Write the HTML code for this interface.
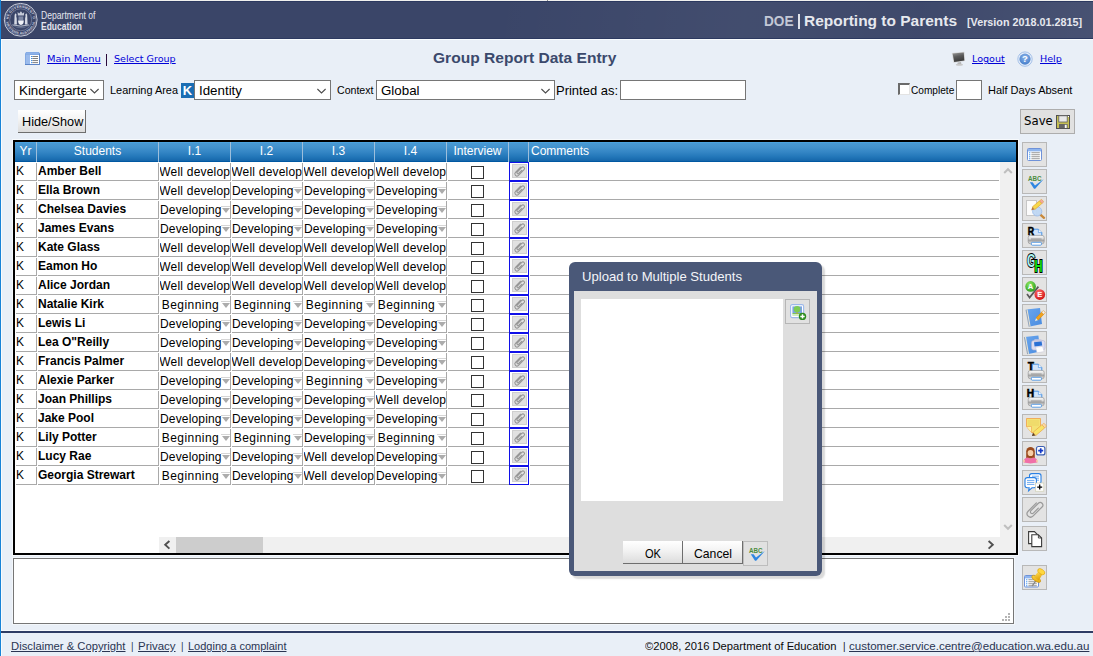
<!DOCTYPE html>
<html><head><meta charset="utf-8"><title>Group Report Data Entry</title>
<style>
*{box-sizing:border-box;margin:0;padding:0}
html,body{width:1093px;height:656px;overflow:hidden}
body{background:#e9eff7;font-family:"Liberation Sans",Arial,sans-serif;font-size:12px;color:#000;position:relative}
.abs{position:absolute}
.v{font-family:"DejaVu Sans","Liberation Sans",sans-serif}
a{color:#0000ee;text-decoration:underline}
#leftline{left:0;top:0;width:1px;height:656px;background:#1883d7}
#topline{left:1px;top:0;width:1092px;height:1px;background:#f0f0ee}
#hdr{left:1px;top:1px;width:1092px;height:39px;background:linear-gradient(97deg,rgba(255,255,255,0) 45%,rgba(255,255,255,.045) 68%,rgba(255,255,255,.025) 84%,rgba(255,255,255,.07) 100%),#3a4568;border-top:1px solid #2c3960;border-bottom:1px solid #f8fbfd;box-shadow:inset 0 -1px 0 #2c3960}
#leftwhite{left:1px;top:40px;width:1px;height:616px;background:#f8fbfd}
.t{white-space:nowrap;transform-origin:0 0;display:block}
.btn3{background:linear-gradient(#ffffff,#f4f4f4 40%,#dcdcdc);border-right:1px solid #6e6e6e;border-bottom:1px solid #6e6e6e}
.sel{border:1px solid #767676;background:#fff;height:20px;font-size:13.33px;line-height:18px;padding-left:4px;padding-top:1px;white-space:nowrap;overflow:hidden}
.sel svg{position:absolute;right:3px;top:7px}
.lbl{font-size:11px;line-height:14px;white-space:nowrap}
.btn{border:1px solid #adadad;background:#e1e1e1;font-size:13.33px;text-align:center;white-space:nowrap}
/* table */
#grid{left:13px;top:140px;width:1005px;height:415px;border:2px solid #000;background:#fff;box-shadow:0 0 0 1px #f6f9fc}
#ghead{left:15px;top:142px;width:1001px;height:20px;background:linear-gradient(#4ba3e0 0,#4ba3e0 5%,#4899d3 6%,#4493ce 25%,#3486c5 50%,#2276b8 75%,#1566aa 94.9%,#0058a2 95%,#0058a2 100%)}
.th{top:142px;height:20px;color:#fff;font-size:12px;line-height:19px;text-align:center;border-right:1px solid #9dbfdc;white-space:nowrap}
.row{left:15px;width:985px;height:18px}
.c{position:absolute;top:0;height:18px;font-size:12px;line-height:17px;white-space:nowrap;overflow:hidden;border-right:1px solid #a9a9a9;border-bottom:1px solid #a9a9a9}
.yr{left:1px;width:21px;padding-left:0}
.nm{left:23px;width:121px;font-weight:bold;padding-left:0}
.sl{width:71px;text-align:center;padding-right:9px;letter-spacing:0.2px}
.sl.w{text-align:left;padding:0;letter-spacing:0.2px;text-indent:-0.7px}
.sl s{position:absolute;right:0;top:5px;width:9px;height:1px;background:#d6d6d6}
.sl i{position:absolute;right:0;top:7px;width:0;height:0;border-left:4.5px solid transparent;border-right:4.5px solid transparent;border-top:5px solid #acacac}
.iv{left:433px;width:61px;border-right:0}
.iv b{position:absolute;left:23px;top:3px;width:13px;height:13px;border:1px solid #333;background:#fff}
.at{position:absolute;left:494px;top:-1px;width:20px;height:19px;border:1px solid #1010e8;background:#fff}
.at u{position:absolute;left:2px;top:1px;width:15px;height:14px;background:#e1e1e1;border:1px solid #cfcfcf}
.at svg{position:absolute;left:0;top:0}
.cm{left:515px;width:469px;border-right:0}
/* toolbar */
.tb{left:1022px;width:25px;height:25px;border:1px solid #b8b8b8;background:#e3e3e3}
.tb svg{position:absolute;left:-1px;top:-1px}
.sel em{position:absolute;right:0;top:0;width:17px;height:18px;background:#fff}
#dlg{left:569px;top:262px;width:253px;height:314px;background:#4a5878;border-radius:6px;box-shadow:3px 3px 1.5px rgba(0,0,0,0.15)}
.sl{line-height:18px}
.sl.b{letter-spacing:.45px}
.sl.d{letter-spacing:.16px}
</style></head><body>

<div class="abs" id="topline"></div>
<div class="abs" style="left:547px;top:0;width:1px;height:1px;background:#8a8a8a"></div>
<div class="abs" id="hdr"></div>
<div class="abs" id="leftline"></div>
<div class="abs" id="leftwhite"></div>
<svg class="abs" style="left:0;top:0" width="42" height="40" viewBox="0 0 42 40">
<defs><path id="arcT" d="M8.6 19.8 A12.1 12.1 0 0 1 32.8 19.8"/><path id="arcB" d="M6.2 19.8 A14.5 14.5 0 0 0 35.2 19.8"/></defs>
<circle cx="20.7" cy="19.8" r="16.4" fill="none" stroke="#c9cedb" stroke-width="1"/>
<circle cx="20.7" cy="19.8" r="15.3" fill="none" stroke="#8e97b2" stroke-width=".5"/>
<circle cx="20.7" cy="19.8" r="11" fill="none" stroke="#8e97b2" stroke-width=".6"/>
<text font-family="Liberation Sans,Arial,sans-serif" font-weight="bold" font-size="3.3" fill="#d3d7e2" letter-spacing=".25"><textPath href="#arcT" startOffset="50%" text-anchor="middle">THE GOVERNMENT OF</textPath></text>
<text font-family="Liberation Sans,Arial,sans-serif" font-weight="bold" font-size="3.3" fill="#d3d7e2" letter-spacing=".25"><textPath href="#arcB" startOffset="50%" text-anchor="middle">WESTERN AUSTRALIA</textPath></text>
<path d="M12.2 25.4 Q20.8 28.2 29.4 25.4 Q20.8 31.2 12.2 25.4 Z" fill="#5d6989"/>
<path d="M12.4 24.9 Q20.8 27.3 29.2 24.9" fill="none" stroke="#c3c8d6" stroke-width=".9"/>
<path d="M17.9 15.5 L17.6 12.1 L19.2 13.5 L20.9 11.3 L22.6 13.5 L24.2 12.1 L23.9 15.5 Z" fill="#c6cbd9"/>
<path d="M14.2 24.6 L14.5 17.4 Q14.3 14.2 15.5 13.2 L16.5 14.4 Q15.9 16.2 16.7 18.2 L16.9 24.6 Z" fill="#d6dae5"/>
<path d="M27.6 24.6 L27.3 17.4 Q27.5 14.2 26.3 13.2 L25.3 14.4 Q25.9 16.2 25.1 18.2 L24.9 24.6 Z" fill="#d6dae5"/>
<rect x="18.5" y="16.4" width="4.8" height="4.2" fill="#7f89a6"/>
<path d="M18.1 20.6 H23.8 Q23.8 24.7 20.95 25 Q18.1 24.7 18.1 20.6 Z" fill="#f0f2f7"/>
</svg><div class="abs t" style="left:41px;top:10px;font-family:'Liberation Sans',Arial,sans-serif;color:#e4e6ee;font-size:10px;line-height:11px;transform:scaleX(0.8600)">Department of</div>
<div class="abs t" style="left:41px;top:21px;font-family:'Liberation Sans',Arial,sans-serif;color:#e4e6ee;font-size:10px;line-height:11px;font-weight:bold;transform:scaleX(0.8481)">Education</div>
<div class="abs t" style="left:764px;top:12px;font-family:'Liberation Sans',Arial,sans-serif;color:#c3c8d6;font-size:14px;line-height:18px;font-weight:bold;transform:scaleX(0.9722)">DOE</div>
<div class="abs" style="left:798px;top:14px;width:2px;height:15px;background:#e0e3ea"></div>
<div class="abs t" style="left:803.5px;top:12px;font-family:'Liberation Sans',Arial,sans-serif;color:#e6e8ee;font-size:14px;line-height:18px;font-weight:bold;transform:scaleX(1.1049)">Reporting to Parents</div>
<div class="abs t" style="left:967px;top:15px;font-family:'Liberation Sans',Arial,sans-serif;color:#e6e8ee;font-size:11px;line-height:14px;font-weight:bold;transform:scaleX(0.9794)">[Version 2018.01.2815]</div>
<a class="abs t" style="left:47px;top:52px;font-family:'DejaVu Sans','Liberation Sans',sans-serif;font-size:9.5px;line-height:13px;color:#0000d8;text-decoration:underline;transform:scaleX(1.0367)">Main Menu</a>
<div class="abs" style="left:106px;top:54px;width:1px;height:12px;background:#2a0a3a"></div>
<a class="abs t" style="left:114px;top:52px;font-family:'DejaVu Sans','Liberation Sans',sans-serif;font-size:9.5px;line-height:13px;color:#0000d8;text-decoration:underline;transform:scaleX(1.0073)">Select Group</a>
<div class="abs t" style="left:433px;top:48px;font-family:'Liberation Sans',Arial,sans-serif;font-size:15px;line-height:19px;font-weight:bold;color:#3b496c;transform:scaleX(1.0374)">Group Report Data Entry</div>
<a class="abs t" style="left:972px;top:52px;font-family:'DejaVu Sans','Liberation Sans',sans-serif;font-size:9.5px;line-height:13px;color:#0000d8;text-decoration:underline;transform:scaleX(1.0083)">Logout</a>
<a class="abs t" style="left:1039.5px;top:52px;font-family:'DejaVu Sans','Liberation Sans',sans-serif;font-size:9.5px;line-height:13px;color:#0000d8;text-decoration:underline;transform:scaleX(1.0059)">Help</a>
<div class="abs sel" style="left:14px;top:80px;width:90px"><span class="st">Kindergarten</span><em></em><svg width="11" height="7" viewBox="0 0 11 7"><path d="M1.4 1 L5.5 5 L9.6 1" fill="none" stroke="#4a4a4a" stroke-width="1.05"/></svg></div>
<div class="abs t" style="left:109.5px;top:83px;font-family:'Liberation Sans',Arial,sans-serif;font-size:11px;line-height:14px;transform:scaleX(0.9927)">Learning Area</div>
<div class="abs" style="left:181px;top:83px;width:13px;height:15px;background:#1b6db3;color:#fff;font-size:13px;line-height:15px;font-weight:bold;text-align:center">K</div>
<div class="abs sel" style="left:194px;top:80px;width:137px"><span class="st">Identity</span><svg width="11" height="7" viewBox="0 0 11 7"><path d="M1.4 1 L5.5 5 L9.6 1" fill="none" stroke="#4a4a4a" stroke-width="1.05"/></svg></div>
<div class="abs t" style="left:336.5px;top:83px;font-family:'Liberation Sans',Arial,sans-serif;font-size:11px;line-height:14px;transform:scaleX(0.9625)">Context</div>
<div class="abs sel" style="left:376px;top:80px;width:179px"><span class="st">Global</span><svg width="11" height="7" viewBox="0 0 11 7"><path d="M1.4 1 L5.5 5 L9.6 1" fill="none" stroke="#4a4a4a" stroke-width="1.05"/></svg></div>
<div class="abs t" style="left:555.6px;top:83px;font-family:'Liberation Sans',Arial,sans-serif;font-size:13.33px;line-height:16px;transform:scaleX(0.9730)">Printed as:</div>
<div class="abs" style="left:620px;top:80px;width:126px;height:20px;border:1px solid #767676;background:#fff"></div>
<div class="abs" style="left:898px;top:83px;width:12px;height:12px;border:solid;border-width:2px 1px 1px 2px;border-color:#6a6a6a #e3e3e3 #e3e3e3 #6a6a6a;background:#fff"></div>
<div class="abs t" style="left:911.3px;top:83px;font-family:'Liberation Sans',Arial,sans-serif;font-size:11px;line-height:14px;transform:scaleX(0.9197)">Complete</div>
<div class="abs" style="left:956px;top:80px;width:26px;height:20px;border:1px solid #767676;background:#fff"></div>
<div class="abs t" style="left:987.6px;top:83px;font-family:'Liberation Sans',Arial,sans-serif;font-size:11px;line-height:14px;transform:scaleX(1.0003)">Half Days Absent</div>
<div class="abs btn3" style="left:18px;top:110px;width:68px;height:23px"></div>
<div class="abs t" style="left:21.7px;top:114px;font-family:'Liberation Sans',Arial,sans-serif;font-size:13px;line-height:16px;transform:scaleX(0.9750)">Hide/Show</div>
<div class="abs" style="left:1020px;top:109px;width:55px;height:25px;border:1px solid #adadad;background:#e1e1e1"></div>
<div class="abs t" style="left:1024.3px;top:114px;font-family:'DejaVu Sans','Liberation Sans',sans-serif;font-size:12px;line-height:15px;transform:scaleX(0.9773)">Save</div>
<div class="abs" style="left:13px;top:558px;width:1001px;height:66px;border:1px solid #767676;background:#fff;box-shadow:0 0 0 1px #f3f7fb"></div>
<div class="abs" style="left:1px;top:630px;width:1092px;height:1px;background:#f6f9fc"></div>
<div class="abs" style="left:1px;top:631px;width:1092px;height:2px;background:#2f3c64"></div>
<div class="abs" style="left:1008px;top:613px;width:2px;height:2px;background:#b4b4b4"></div>
<div class="abs" style="left:1005px;top:616px;width:2px;height:2px;background:#b4b4b4"></div>
<div class="abs" style="left:1008px;top:616px;width:2px;height:2px;background:#b4b4b4"></div>
<div class="abs" style="left:1002px;top:619px;width:2px;height:2px;background:#b4b4b4"></div>
<div class="abs" style="left:1005px;top:619px;width:2px;height:2px;background:#b4b4b4"></div>
<div class="abs" style="left:1008px;top:619px;width:2px;height:2px;background:#b4b4b4"></div>
<div class="abs t" style="left:11px;top:639px;font-family:'Liberation Sans',Arial,sans-serif;font-size:11px;line-height:14px;color:#2a3553;text-decoration:underline;transform:scaleX(1.0235)">Disclaimer &amp; Copyright</div>
<div class="abs t" style="left:130.5px;top:639px;font-family:'Liberation Sans',Arial,sans-serif;font-size:11px;line-height:14px;color:#2a3553;transform:scaleX(0.8743)">|</div>
<div class="abs t" style="left:138px;top:639px;font-family:'Liberation Sans',Arial,sans-serif;font-size:11px;line-height:14px;color:#2a3553;text-decoration:underline;transform:scaleX(1.0399)">Privacy</div>
<div class="abs t" style="left:180.5px;top:639px;font-family:'Liberation Sans',Arial,sans-serif;font-size:11px;line-height:14px;color:#2a3553;transform:scaleX(0.8743)">|</div>
<div class="abs t" style="left:188px;top:639px;font-family:'Liberation Sans',Arial,sans-serif;font-size:11px;line-height:14px;color:#2a3553;text-decoration:underline;transform:scaleX(1.0003)">Lodging a complaint</div>
<div class="abs t" style="left:644.8px;top:639px;font-family:'Liberation Sans',Arial,sans-serif;font-size:11px;line-height:14px;color:#0a0a0a;transform:scaleX(1.0191)">©2008, 2016 Department of Education</div>
<div class="abs t" style="left:843px;top:639px;font-family:'Liberation Sans',Arial,sans-serif;font-size:11px;line-height:14px;color:#0a0a0a;transform:scaleX(0.8743)">|</div>
<div class="abs t" style="left:849.3px;top:639px;font-family:'Liberation Sans',Arial,sans-serif;font-size:11px;line-height:14px;color:#2a3553;text-decoration:underline;transform:scaleX(1.0504)">customer.service.centre@education.wa.edu.au</div>
<div class="abs" id="grid"></div>
<div class="abs" id="ghead"></div>
<div class="abs th" style="left:15px;width:22px">Yr</div>
<div class="abs th" style="left:37px;width:122px">Students</div>
<div class="abs th" style="left:159px;width:72px">I.1</div>
<div class="abs th" style="left:231px;width:72px">I.2</div>
<div class="abs th" style="left:303px;width:72px">I.3</div>
<div class="abs th" style="left:375px;width:72px">I.4</div>
<div class="abs th" style="left:447px;width:62px">Interview</div>
<div class="abs th" style="left:509px;width:20px"></div>
<div class="abs th" style="left:529px;width:200px;text-align:left;border:0;padding-left:2px">Comments</div>
<div class="abs row" style="top:163px"><div class="c yr">K</div><div class="c nm">Amber Bell</div><div class="c sl w" style="left:145px">Well developed</div><div class="c sl w" style="left:217px">Well developed</div><div class="c sl w" style="left:289px">Well developed</div><div class="c sl w" style="left:361px">Well developed</div><div class="c iv"><b></b></div><div class="at"><u><svg width="14" height="13" viewBox="0 0 14 13"><g transform="translate(6.6,6.2) rotate(-45) scale(.7)"><path d="M 5,-3 L -5.3,-3 A 3 3 0 0 0 -5.3,3 L 6,3 A 2.3 2.3 0 0 0 6,-1.6 L -3.2,-1.6 A 1.5 1.5 0 0 0 -3.2,1.4 L 3,1.4" fill="none" stroke="#969696" stroke-width="1.55" stroke-linecap="round"/></g></svg></u></div><div class="c cm"></div></div>
<div class="abs row" style="top:182px"><div class="c yr">K</div><div class="c nm">Ella Brown</div><div class="c sl w" style="left:145px">Well developed</div><div class="c sl d" style="left:217px"><span>Developing</span><i></i><s></s></div><div class="c sl d" style="left:289px"><span>Developing</span><i></i><s></s></div><div class="c sl d" style="left:361px"><span>Developing</span><i></i><s></s></div><div class="c iv"><b></b></div><div class="at"><u><svg width="14" height="13" viewBox="0 0 14 13"><g transform="translate(6.6,6.2) rotate(-45) scale(.7)"><path d="M 5,-3 L -5.3,-3 A 3 3 0 0 0 -5.3,3 L 6,3 A 2.3 2.3 0 0 0 6,-1.6 L -3.2,-1.6 A 1.5 1.5 0 0 0 -3.2,1.4 L 3,1.4" fill="none" stroke="#969696" stroke-width="1.55" stroke-linecap="round"/></g></svg></u></div><div class="c cm"></div></div>
<div class="abs row" style="top:201px"><div class="c yr">K</div><div class="c nm">Chelsea Davies</div><div class="c sl d" style="left:145px"><span>Developing</span><i></i><s></s></div><div class="c sl d" style="left:217px"><span>Developing</span><i></i><s></s></div><div class="c sl d" style="left:289px"><span>Developing</span><i></i><s></s></div><div class="c sl d" style="left:361px"><span>Developing</span><i></i><s></s></div><div class="c iv"><b></b></div><div class="at"><u><svg width="14" height="13" viewBox="0 0 14 13"><g transform="translate(6.6,6.2) rotate(-45) scale(.7)"><path d="M 5,-3 L -5.3,-3 A 3 3 0 0 0 -5.3,3 L 6,3 A 2.3 2.3 0 0 0 6,-1.6 L -3.2,-1.6 A 1.5 1.5 0 0 0 -3.2,1.4 L 3,1.4" fill="none" stroke="#969696" stroke-width="1.55" stroke-linecap="round"/></g></svg></u></div><div class="c cm"></div></div>
<div class="abs row" style="top:220px"><div class="c yr">K</div><div class="c nm">James Evans</div><div class="c sl d" style="left:145px"><span>Developing</span><i></i><s></s></div><div class="c sl d" style="left:217px"><span>Developing</span><i></i><s></s></div><div class="c sl d" style="left:289px"><span>Developing</span><i></i><s></s></div><div class="c sl d" style="left:361px"><span>Developing</span><i></i><s></s></div><div class="c iv"><b></b></div><div class="at"><u><svg width="14" height="13" viewBox="0 0 14 13"><g transform="translate(6.6,6.2) rotate(-45) scale(.7)"><path d="M 5,-3 L -5.3,-3 A 3 3 0 0 0 -5.3,3 L 6,3 A 2.3 2.3 0 0 0 6,-1.6 L -3.2,-1.6 A 1.5 1.5 0 0 0 -3.2,1.4 L 3,1.4" fill="none" stroke="#969696" stroke-width="1.55" stroke-linecap="round"/></g></svg></u></div><div class="c cm"></div></div>
<div class="abs row" style="top:239px"><div class="c yr">K</div><div class="c nm">Kate Glass</div><div class="c sl w" style="left:145px">Well developed</div><div class="c sl w" style="left:217px">Well developed</div><div class="c sl w" style="left:289px">Well developed</div><div class="c sl w" style="left:361px">Well developed</div><div class="c iv"><b></b></div><div class="at"><u><svg width="14" height="13" viewBox="0 0 14 13"><g transform="translate(6.6,6.2) rotate(-45) scale(.7)"><path d="M 5,-3 L -5.3,-3 A 3 3 0 0 0 -5.3,3 L 6,3 A 2.3 2.3 0 0 0 6,-1.6 L -3.2,-1.6 A 1.5 1.5 0 0 0 -3.2,1.4 L 3,1.4" fill="none" stroke="#969696" stroke-width="1.55" stroke-linecap="round"/></g></svg></u></div><div class="c cm"></div></div>
<div class="abs row" style="top:258px"><div class="c yr">K</div><div class="c nm">Eamon Ho</div><div class="c sl w" style="left:145px">Well developed</div><div class="c sl w" style="left:217px">Well developed</div><div class="c sl w" style="left:289px">Well developed</div><div class="c sl w" style="left:361px">Well developed</div><div class="c iv"><b></b></div><div class="at"><u><svg width="14" height="13" viewBox="0 0 14 13"><g transform="translate(6.6,6.2) rotate(-45) scale(.7)"><path d="M 5,-3 L -5.3,-3 A 3 3 0 0 0 -5.3,3 L 6,3 A 2.3 2.3 0 0 0 6,-1.6 L -3.2,-1.6 A 1.5 1.5 0 0 0 -3.2,1.4 L 3,1.4" fill="none" stroke="#969696" stroke-width="1.55" stroke-linecap="round"/></g></svg></u></div><div class="c cm"></div></div>
<div class="abs row" style="top:277px"><div class="c yr">K</div><div class="c nm">Alice Jordan</div><div class="c sl w" style="left:145px">Well developed</div><div class="c sl w" style="left:217px">Well developed</div><div class="c sl w" style="left:289px">Well developed</div><div class="c sl w" style="left:361px">Well developed</div><div class="c iv"><b></b></div><div class="at"><u><svg width="14" height="13" viewBox="0 0 14 13"><g transform="translate(6.6,6.2) rotate(-45) scale(.7)"><path d="M 5,-3 L -5.3,-3 A 3 3 0 0 0 -5.3,3 L 6,3 A 2.3 2.3 0 0 0 6,-1.6 L -3.2,-1.6 A 1.5 1.5 0 0 0 -3.2,1.4 L 3,1.4" fill="none" stroke="#969696" stroke-width="1.55" stroke-linecap="round"/></g></svg></u></div><div class="c cm"></div></div>
<div class="abs row" style="top:296px"><div class="c yr">K</div><div class="c nm">Natalie Kirk</div><div class="c sl b" style="left:145px"><span>Beginning</span><i></i><s></s></div><div class="c sl b" style="left:217px"><span>Beginning</span><i></i><s></s></div><div class="c sl b" style="left:289px"><span>Beginning</span><i></i><s></s></div><div class="c sl b" style="left:361px"><span>Beginning</span><i></i><s></s></div><div class="c iv"><b></b></div><div class="at"><u><svg width="14" height="13" viewBox="0 0 14 13"><g transform="translate(6.6,6.2) rotate(-45) scale(.7)"><path d="M 5,-3 L -5.3,-3 A 3 3 0 0 0 -5.3,3 L 6,3 A 2.3 2.3 0 0 0 6,-1.6 L -3.2,-1.6 A 1.5 1.5 0 0 0 -3.2,1.4 L 3,1.4" fill="none" stroke="#969696" stroke-width="1.55" stroke-linecap="round"/></g></svg></u></div><div class="c cm"></div></div>
<div class="abs row" style="top:315px"><div class="c yr">K</div><div class="c nm">Lewis Li</div><div class="c sl d" style="left:145px"><span>Developing</span><i></i><s></s></div><div class="c sl d" style="left:217px"><span>Developing</span><i></i><s></s></div><div class="c sl d" style="left:289px"><span>Developing</span><i></i><s></s></div><div class="c sl d" style="left:361px"><span>Developing</span><i></i><s></s></div><div class="c iv"><b></b></div><div class="at"><u><svg width="14" height="13" viewBox="0 0 14 13"><g transform="translate(6.6,6.2) rotate(-45) scale(.7)"><path d="M 5,-3 L -5.3,-3 A 3 3 0 0 0 -5.3,3 L 6,3 A 2.3 2.3 0 0 0 6,-1.6 L -3.2,-1.6 A 1.5 1.5 0 0 0 -3.2,1.4 L 3,1.4" fill="none" stroke="#969696" stroke-width="1.55" stroke-linecap="round"/></g></svg></u></div><div class="c cm"></div></div>
<div class="abs row" style="top:334px"><div class="c yr">K</div><div class="c nm">Lea O&quot;Reilly</div><div class="c sl d" style="left:145px"><span>Developing</span><i></i><s></s></div><div class="c sl d" style="left:217px"><span>Developing</span><i></i><s></s></div><div class="c sl d" style="left:289px"><span>Developing</span><i></i><s></s></div><div class="c sl d" style="left:361px"><span>Developing</span><i></i><s></s></div><div class="c iv"><b></b></div><div class="at"><u><svg width="14" height="13" viewBox="0 0 14 13"><g transform="translate(6.6,6.2) rotate(-45) scale(.7)"><path d="M 5,-3 L -5.3,-3 A 3 3 0 0 0 -5.3,3 L 6,3 A 2.3 2.3 0 0 0 6,-1.6 L -3.2,-1.6 A 1.5 1.5 0 0 0 -3.2,1.4 L 3,1.4" fill="none" stroke="#969696" stroke-width="1.55" stroke-linecap="round"/></g></svg></u></div><div class="c cm"></div></div>
<div class="abs row" style="top:353px"><div class="c yr">K</div><div class="c nm">Francis Palmer</div><div class="c sl w" style="left:145px">Well developed</div><div class="c sl w" style="left:217px">Well developed</div><div class="c sl d" style="left:289px"><span>Developing</span><i></i><s></s></div><div class="c sl d" style="left:361px"><span>Developing</span><i></i><s></s></div><div class="c iv"><b></b></div><div class="at"><u><svg width="14" height="13" viewBox="0 0 14 13"><g transform="translate(6.6,6.2) rotate(-45) scale(.7)"><path d="M 5,-3 L -5.3,-3 A 3 3 0 0 0 -5.3,3 L 6,3 A 2.3 2.3 0 0 0 6,-1.6 L -3.2,-1.6 A 1.5 1.5 0 0 0 -3.2,1.4 L 3,1.4" fill="none" stroke="#969696" stroke-width="1.55" stroke-linecap="round"/></g></svg></u></div><div class="c cm"></div></div>
<div class="abs row" style="top:372px"><div class="c yr">K</div><div class="c nm">Alexie Parker</div><div class="c sl d" style="left:145px"><span>Developing</span><i></i><s></s></div><div class="c sl d" style="left:217px"><span>Developing</span><i></i><s></s></div><div class="c sl b" style="left:289px"><span>Beginning</span><i></i><s></s></div><div class="c sl d" style="left:361px"><span>Developing</span><i></i><s></s></div><div class="c iv"><b></b></div><div class="at"><u><svg width="14" height="13" viewBox="0 0 14 13"><g transform="translate(6.6,6.2) rotate(-45) scale(.7)"><path d="M 5,-3 L -5.3,-3 A 3 3 0 0 0 -5.3,3 L 6,3 A 2.3 2.3 0 0 0 6,-1.6 L -3.2,-1.6 A 1.5 1.5 0 0 0 -3.2,1.4 L 3,1.4" fill="none" stroke="#969696" stroke-width="1.55" stroke-linecap="round"/></g></svg></u></div><div class="c cm"></div></div>
<div class="abs row" style="top:391px"><div class="c yr">K</div><div class="c nm">Joan Phillips</div><div class="c sl d" style="left:145px"><span>Developing</span><i></i><s></s></div><div class="c sl d" style="left:217px"><span>Developing</span><i></i><s></s></div><div class="c sl d" style="left:289px"><span>Developing</span><i></i><s></s></div><div class="c sl w" style="left:361px">Well developed</div><div class="c iv"><b></b></div><div class="at"><u><svg width="14" height="13" viewBox="0 0 14 13"><g transform="translate(6.6,6.2) rotate(-45) scale(.7)"><path d="M 5,-3 L -5.3,-3 A 3 3 0 0 0 -5.3,3 L 6,3 A 2.3 2.3 0 0 0 6,-1.6 L -3.2,-1.6 A 1.5 1.5 0 0 0 -3.2,1.4 L 3,1.4" fill="none" stroke="#969696" stroke-width="1.55" stroke-linecap="round"/></g></svg></u></div><div class="c cm"></div></div>
<div class="abs row" style="top:410px"><div class="c yr">K</div><div class="c nm">Jake Pool</div><div class="c sl d" style="left:145px"><span>Developing</span><i></i><s></s></div><div class="c sl d" style="left:217px"><span>Developing</span><i></i><s></s></div><div class="c sl d" style="left:289px"><span>Developing</span><i></i><s></s></div><div class="c sl d" style="left:361px"><span>Developing</span><i></i><s></s></div><div class="c iv"><b></b></div><div class="at"><u><svg width="14" height="13" viewBox="0 0 14 13"><g transform="translate(6.6,6.2) rotate(-45) scale(.7)"><path d="M 5,-3 L -5.3,-3 A 3 3 0 0 0 -5.3,3 L 6,3 A 2.3 2.3 0 0 0 6,-1.6 L -3.2,-1.6 A 1.5 1.5 0 0 0 -3.2,1.4 L 3,1.4" fill="none" stroke="#969696" stroke-width="1.55" stroke-linecap="round"/></g></svg></u></div><div class="c cm"></div></div>
<div class="abs row" style="top:429px"><div class="c yr">K</div><div class="c nm">Lily Potter</div><div class="c sl b" style="left:145px"><span>Beginning</span><i></i><s></s></div><div class="c sl b" style="left:217px"><span>Beginning</span><i></i><s></s></div><div class="c sl d" style="left:289px"><span>Developing</span><i></i><s></s></div><div class="c sl b" style="left:361px"><span>Beginning</span><i></i><s></s></div><div class="c iv"><b></b></div><div class="at"><u><svg width="14" height="13" viewBox="0 0 14 13"><g transform="translate(6.6,6.2) rotate(-45) scale(.7)"><path d="M 5,-3 L -5.3,-3 A 3 3 0 0 0 -5.3,3 L 6,3 A 2.3 2.3 0 0 0 6,-1.6 L -3.2,-1.6 A 1.5 1.5 0 0 0 -3.2,1.4 L 3,1.4" fill="none" stroke="#969696" stroke-width="1.55" stroke-linecap="round"/></g></svg></u></div><div class="c cm"></div></div>
<div class="abs row" style="top:448px"><div class="c yr">K</div><div class="c nm">Lucy Rae</div><div class="c sl d" style="left:145px"><span>Developing</span><i></i><s></s></div><div class="c sl d" style="left:217px"><span>Developing</span><i></i><s></s></div><div class="c sl w" style="left:289px">Well developed</div><div class="c sl d" style="left:361px"><span>Developing</span><i></i><s></s></div><div class="c iv"><b></b></div><div class="at"><u><svg width="14" height="13" viewBox="0 0 14 13"><g transform="translate(6.6,6.2) rotate(-45) scale(.7)"><path d="M 5,-3 L -5.3,-3 A 3 3 0 0 0 -5.3,3 L 6,3 A 2.3 2.3 0 0 0 6,-1.6 L -3.2,-1.6 A 1.5 1.5 0 0 0 -3.2,1.4 L 3,1.4" fill="none" stroke="#969696" stroke-width="1.55" stroke-linecap="round"/></g></svg></u></div><div class="c cm"></div></div>
<div class="abs row" style="top:467px"><div class="c yr">K</div><div class="c nm">Georgia Strewart</div><div class="c sl b" style="left:145px"><span>Beginning</span><i></i><s></s></div><div class="c sl d" style="left:217px"><span>Developing</span><i></i><s></s></div><div class="c sl w" style="left:289px">Well developed</div><div class="c sl d" style="left:361px"><span>Developing</span><i></i><s></s></div><div class="c iv"><b></b></div><div class="at"><u><svg width="14" height="13" viewBox="0 0 14 13"><g transform="translate(6.6,6.2) rotate(-45) scale(.7)"><path d="M 5,-3 L -5.3,-3 A 3 3 0 0 0 -5.3,3 L 6,3 A 2.3 2.3 0 0 0 6,-1.6 L -3.2,-1.6 A 1.5 1.5 0 0 0 -3.2,1.4 L 3,1.4" fill="none" stroke="#969696" stroke-width="1.55" stroke-linecap="round"/></g></svg></u></div><div class="c cm"></div></div>
<div class="abs" style="left:1000px;top:162px;width:16px;height:375px;background:#f0f0f0"></div>
<svg class="abs" style="left:1003px;top:167px" width="10" height="7" viewBox="0 0 10 7"><path d="M1.2 6 L5 2.2 L8.8 6" fill="none" stroke="#bfbfbf" stroke-width="2"/></svg>
<svg class="abs" style="left:1003px;top:524px" width="10" height="7" viewBox="0 0 10 7"><path d="M1.2 1 L5 4.8 L8.8 1" fill="none" stroke="#bfbfbf" stroke-width="2"/></svg>
<div class="abs" style="left:159px;top:537px;width:857px;height:16px;background:#f0f0f0"></div>
<div class="abs" style="left:176px;top:537px;width:87px;height:16px;background:#cdcdcd"></div>
<svg class="abs" style="left:163px;top:540px" width="8" height="10" viewBox="0 0 8 10"><path d="M6.4 1 L2.2 4.8 L6.4 8.6" fill="none" stroke="#505050" stroke-width="1.9"/></svg>
<svg class="abs" style="left:987px;top:540px" width="8" height="10" viewBox="0 0 8 10"><path d="M1.6 1 L5.8 4.8 L1.6 8.6" fill="none" stroke="#505050" stroke-width="1.9"/></svg>
<svg width="0" height="0" style="position:absolute"><defs>
<linearGradient id="gPr" x1="0" y1="0" x2="0" y2="1"><stop offset="0" stop-color="#fdfdfd"/><stop offset=".45" stop-color="#d4d4d4"/><stop offset=".55" stop-color="#9c9c9c"/><stop offset="1" stop-color="#e6e6e6"/></linearGradient>
<linearGradient id="gBk" x1="0" y1="0" x2="1" y2="1"><stop offset="0" stop-color="#6aa6ee"/><stop offset="1" stop-color="#4a8ce0"/></linearGradient>
<radialGradient id="gGr" cx=".4" cy=".3" r=".8"><stop offset="0" stop-color="#8ee860"/><stop offset="1" stop-color="#22961a"/></radialGradient>
<radialGradient id="gRd" cx=".4" cy=".3" r=".8"><stop offset="0" stop-color="#ff7070"/><stop offset="1" stop-color="#cc0808"/></radialGradient>
<linearGradient id="gMo" x1="0" y1="0" x2="0.3" y2="1"><stop offset="0" stop-color="#9a9a9a"/><stop offset=".5" stop-color="#5a5a5a"/><stop offset="1" stop-color="#3c3c3c"/></linearGradient>
<radialGradient id="gHp" cx=".5" cy=".35" r=".7"><stop offset="0" stop-color="#8fb6ea"/><stop offset="1" stop-color="#3f79c8"/></radialGradient>
<linearGradient id="gPin" x1="0" y1="0" x2="1" y2="1"><stop offset="0" stop-color="#ffe060"/><stop offset="1" stop-color="#e0a000"/></linearGradient>
</defs></svg>
<div class="abs tb" style="top:142px"><svg width="25" height="25" viewBox="0 0 25 25"><rect x="5.5" y="6.5" width="14" height="12" rx="1" fill="#fff" stroke="#6f92d8"/><rect x="6" y="7" width="13" height="2.4" fill="#8fb5ee"/><rect x="7.2" y="10.2" width="1.1" height="1.1" fill="#2f8cf0"/><rect x="9.4" y="10.299999999999999" width="8.4" height="0.9" fill="#8c8c8c"/><rect x="7.2" y="12.2" width="1.1" height="1.1" fill="#2f8cf0"/><rect x="9.4" y="12.299999999999999" width="8.4" height="0.9" fill="#8c8c8c"/><rect x="7.2" y="14.2" width="1.1" height="1.1" fill="#2f8cf0"/><rect x="9.4" y="14.299999999999999" width="8.4" height="0.9" fill="#8c8c8c"/><rect x="7.2" y="16.2" width="1.1" height="1.1" fill="#2f8cf0"/><rect x="9.4" y="16.3" width="8.4" height="0.9" fill="#8c8c8c"/></svg></div>
<div class="abs tb" style="top:169px"><svg width="25" height="25" viewBox="0 0 25 25"><text x="6" y="11.6" font-family="Liberation Sans,Arial,sans-serif" font-weight="bold" font-size="7.2" fill="#4c8c3c" textLength="13.5" lengthAdjust="spacingAndGlyphs">ABC</text><path d="M7.8 13.2 L10.6 13.2 L13 16.4 L21.8 10 L13.2 19.8 L12 19.8 Z" fill="#2f86e2"/></svg></div>
<div class="abs tb" style="top:196px"><svg width="25" height="25" viewBox="0 0 25 25"><rect x="4.5" y="4.5" width="10" height="15" fill="#fbfbfb" stroke="#c6c6c6"/><path d="M18.6 18.8 L22 21.8" stroke="#c98a3c" stroke-width="2.4" stroke-linecap="round"/><circle cx="15.2" cy="15.4" r="4.6" fill="#c0d8f4" stroke="#9cbcea" stroke-width=".9" opacity=".95"/><g transform="translate(9.2,14.2) rotate(-40)"><path d="M0 0 L3.2 -1.8 L3.2 1.8 Z" fill="#b87a3e"/><rect x="3.2" y="-1.8" width="9.2" height="3.6" fill="#f6d84a" stroke="#e0a030" stroke-width=".6"/><rect x="12.4" y="-1.8" width="2.6" height="3.6" rx=".8" fill="#f2a6a6" stroke="#e0a030" stroke-width=".5"/></g></svg></div>
<div class="abs tb" style="top:223px"><svg width="25" height="25" viewBox="0 0 25 25"><path d="M10.2 6.2 H16.4 L19.8 9.6 V13.6 H10.2 Z" fill="#d4e5fa" stroke="#3a8ae2" stroke-width=".9"/><path d="M16.4 6.2 V9.6 H19.8" fill="#f4f9ff" stroke="#3a8ae2" stroke-width=".6"/><rect x="6.2" y="12.4" width="16" height="8.4" rx="2.2" fill="url(#gPr)" stroke="#8c8c8c" stroke-width=".6"/><rect x="9" y="15.4" width="10.6" height="1.1" fill="#6a6a6a" opacity=".5"/><rect x="9.4" y="19.3" width="10" height="2.9" rx=".9" fill="#fff" stroke="#3a8ae2" stroke-width=".8"/><text x="5.8" y="12" font-family="Liberation Sans,Arial,sans-serif" font-weight="bold" font-size="10" fill="#000" stroke="#000" stroke-width=".5" textLength="6.4" lengthAdjust="spacingAndGlyphs">R</text></svg></div>
<div class="abs tb" style="top:250px"><svg width="25" height="25" viewBox="0 0 25 25"><text x="5" y="16.8" font-family="Liberation Sans,Arial,sans-serif" font-weight="bold" font-size="17.6" fill="#a6f2f2" stroke="#000" stroke-width="2" paint-order="stroke" textLength="8.6" lengthAdjust="spacingAndGlyphs">G</text><text x="12.6" y="21.6" font-family="Liberation Sans,Arial,sans-serif" font-weight="bold" font-size="15.6" fill="#12e212" stroke="#000" stroke-width="2" paint-order="stroke" textLength="8" lengthAdjust="spacingAndGlyphs">H</text></svg></div>
<div class="abs tb" style="top:277px"><svg width="25" height="25" viewBox="0 0 25 25"><path d="M5 17 L7.6 20.6 L16.4 9.6" fill="none" stroke="#5a5a5a" stroke-width="1.7"/><circle cx="8.6" cy="9.4" r="5.3" fill="url(#gGr)"/><circle cx="17.8" cy="17.6" r="5.3" fill="url(#gRd)"/><text x="8.6" y="12.2" text-anchor="middle" font-family="Liberation Sans,Arial,sans-serif" font-weight="bold" font-size="7.6" fill="#fff">A</text><text x="17.9" y="20.4" text-anchor="middle" font-family="Liberation Sans,Arial,sans-serif" font-weight="bold" font-size="7.6" fill="#fff">E</text></svg></div>
<div class="abs tb" style="top:304px"><svg width="25" height="25" viewBox="0 0 25 25"><g transform="translate(0,0)"><path d="M4.2 5.6 L18 4 L20 20 L8 22.6 Z" fill="url(#gBk)"/><path d="M4.2 5.6 L5.6 5.4 L8.6 22.4 L7.4 22.7 Z" fill="#e8e4d4"/><path d="M4 5.8 L7.2 22.8" stroke="#6e86a8" stroke-width=".7"/></g><g transform="translate(13,17.2) rotate(-46)"><path d="M0 0 L3.2 -1.5 L3.2 1.5 Z" fill="#f2ead8"/><rect x="3.2" y="-1.5" width="7.7" height="3" fill="#f0a21e" stroke="#d88a10" stroke-width=".6"/><rect x="10.9" y="-1.5" width="2.6" height="3" rx=".8" fill="#f4f0f0" stroke="#d88a10" stroke-width=".5"/></g></svg></div>
<div class="abs tb" style="top:331px"><svg width="25" height="25" viewBox="0 0 25 25"><g transform="translate(-1.6,0.4)"><path d="M4.2 5.6 L18 4 L20 20 L8 22.6 Z" fill="url(#gBk)"/><path d="M4.2 5.6 L5.6 5.4 L8.6 22.4 L7.4 22.7 Z" fill="#e8e4d4"/><path d="M4 5.8 L7.2 22.8" stroke="#6e86a8" stroke-width=".7"/></g><rect x="9.5" y="9.5" width="13.5" height="9.5" rx="2.2" fill="#dcdcf0" stroke="#b0b0cc" stroke-width=".6"/><rect x="12.2" y="8.2" width="7.5" height="3" rx=".8" fill="#c8c8e0"/><path d="M12 11.2 L19.6 10.4 L20.2 14.6 L12.6 15.6 Z" fill="#2a70d4"/><path d="M13.6 16.2 L20.6 15.4 L22.2 20.6 L15 21.8 Z" fill="#fff" stroke="#c4c4d8" stroke-width=".5"/></svg></div>
<div class="abs tb" style="top:358px"><svg width="25" height="25" viewBox="0 0 25 25"><path d="M10.2 6.2 H16.4 L19.8 9.6 V13.6 H10.2 Z" fill="#d4e5fa" stroke="#3a8ae2" stroke-width=".9"/><path d="M16.4 6.2 V9.6 H19.8" fill="#f4f9ff" stroke="#3a8ae2" stroke-width=".6"/><rect x="6.2" y="12.4" width="16" height="8.4" rx="2.2" fill="url(#gPr)" stroke="#8c8c8c" stroke-width=".6"/><rect x="9" y="15.4" width="10.6" height="1.1" fill="#6a6a6a" opacity=".5"/><rect x="9.4" y="19.3" width="10" height="2.9" rx=".9" fill="#fff" stroke="#3a8ae2" stroke-width=".8"/><text x="5.8" y="12" font-family="Liberation Sans,Arial,sans-serif" font-weight="bold" font-size="10" fill="#000" stroke="#000" stroke-width=".5" textLength="6.2" lengthAdjust="spacingAndGlyphs">T</text></svg></div>
<div class="abs tb" style="top:385px"><svg width="25" height="25" viewBox="0 0 25 25"><path d="M10.2 6.2 H16.4 L19.8 9.6 V13.6 H10.2 Z" fill="#d4e5fa" stroke="#3a8ae2" stroke-width=".9"/><path d="M16.4 6.2 V9.6 H19.8" fill="#f4f9ff" stroke="#3a8ae2" stroke-width=".6"/><rect x="6.2" y="12.4" width="16" height="8.4" rx="2.2" fill="url(#gPr)" stroke="#8c8c8c" stroke-width=".6"/><rect x="9" y="15.4" width="10.6" height="1.1" fill="#6a6a6a" opacity=".5"/><rect x="9.4" y="19.3" width="10" height="2.9" rx=".9" fill="#fff" stroke="#3a8ae2" stroke-width=".8"/><text x="4.8" y="12" font-family="Liberation Sans,Arial,sans-serif" font-weight="bold" font-size="10" fill="#000" stroke="#000" stroke-width=".5" textLength="7.4" lengthAdjust="spacingAndGlyphs">H</text></svg></div>
<div class="abs tb" style="top:414px"><svg width="25" height="25" viewBox="0 0 25 25"><path d="M4.5 4.5 H18.5 V14 L14 18.5 H9.5 L4.5 12.5 Z" fill="#f4e274" stroke="#f0a850" stroke-width=".9"/><path d="M4.5 12.5 H9.5 V18.5" fill="#fbf2b0" stroke="#f0a850" stroke-width=".7"/><path d="M6 7 H17 M6 9 H17 M6 11 H17" stroke="#e6cc58" stroke-width=".6"/><g transform="translate(10,22) rotate(-40.5)"><path d="M0 0 L3.2 -2.1 L3.2 2.1 Z" fill="#5a3a1a"/><rect x="3.2" y="-2.1" width="11.7" height="4.2" fill="#f8e468" stroke="#e8a040" stroke-width=".6"/><rect x="14.9" y="-2.1" width="2.6" height="4.2" rx=".8" fill="#f8d8a8" stroke="#e8a040" stroke-width=".5"/></g></svg></div>
<div class="abs tb" style="top:441px"><svg width="25" height="25" viewBox="0 0 25 25"><path d="M4.2 17.6 V10.6 A4.3 4.6 0 0 1 12.8 10.6 V17.6 Z" fill="#9a4a1e"/><ellipse cx="8.5" cy="12" rx="2.9" ry="3.1" fill="#f6cfa8"/><path d="M1.6 21.6 Q1.2 17 6 16.6 L8.5 18 L11 16.6 Q15.8 17 15.4 21.6 Q8.5 23.2 1.6 21.6 Z" fill="#f070a8"/><rect x="1.2" y="18.8" width="1.6" height="2.6" rx=".8" fill="#f6cfa8"/><rect x="14.2" y="18.8" width="1.6" height="2.6" rx=".8" fill="#f6cfa8"/><rect x="14.5" y="5.5" width="8.4" height="8.4" rx="2" fill="#fff" stroke="#3c60b4" stroke-width="1.2"/><path d="M18.7 7.2 V12.2 M16.2 9.7 H21.2" stroke="#1238c8" stroke-width="1.7"/></svg></div>
<div class="abs tb" style="top:470px"><svg width="25" height="25" viewBox="0 0 25 25"><rect x="7.5" y="3.6" width="11.5" height="10" rx="2.2" fill="#fff" stroke="#2a80e4" stroke-width="1.1"/><path d="M10 6.2 H17 M10 8.2 H17 M10 10.2 H17" stroke="#4a94ea" stroke-width=".8"/><path d="M5.2 7.6 H12.2 A2.2 2.2 0 0 1 14.4 9.8 V15.6 A2.2 2.2 0 0 1 12.2 17.8 H10 L6.6 20.8 L7.2 17.8 H5.2 A2.2 2.2 0 0 1 3 15.6 V9.8 A2.2 2.2 0 0 1 5.2 7.6 Z" fill="#fff" stroke="#2a80e4" stroke-width="1.1"/><path d="M5 10.4 H12.4 M5 12.4 H12.4 M5 14.4 H12.4" stroke="#4a94ea" stroke-width=".8"/><rect x="13.6" y="13" width="8.2" height="8.2" fill="#fff" stroke="#cfcfb4" stroke-width=".7"/><path d="M17.7 14.6 V19.6 M15.2 17.1 H20.2" stroke="#000" stroke-width="1.3"/></svg></div>
<div class="abs tb" style="top:497px"><svg width="25" height="25" viewBox="0 0 25 25"><g transform="translate(12.8,12.4) rotate(-45) scale(1.14)"><path d="M 5,-3 L -5.3,-3 A 3 3 0 0 0 -5.3,3 L 6,3 A 2.3 2.3 0 0 0 6,-1.6 L -3.2,-1.6 A 1.5 1.5 0 0 0 -3.2,1.4 L 3,1.4" fill="none" stroke="#9a9a9a" stroke-width="1.05" stroke-linecap="round"/></g></svg></div>
<div class="abs tb" style="top:526px"><svg width="25" height="25" viewBox="0 0 25 25"><path d="M6.6 5.6 H12.4 L15.4 8.6 V17.6 H6.6 Z" fill="#fff" stroke="#3a3a3a" stroke-width="1.1"/><path d="M9.8 8.8 H16.4 L19.6 12 V20.6 H9.8 Z" fill="#fff" stroke="#3a3a3a" stroke-width="1.1"/><path d="M16.4 8.8 V12 H19.6" fill="none" stroke="#3a3a3a" stroke-width=".9"/></svg></div>
<div class="abs tb" style="top:565px"><svg width="25" height="25" viewBox="0 0 25 25"><rect x="2.5" y="10.5" width="14" height="11.5" rx="1" fill="#fff" stroke="#6f92d8"/><rect x="3" y="11" width="13" height="2.4" fill="#8fb5ee"/><rect x="4.2" y="14.2" width="1.1" height="1.1" fill="#2f8cf0"/><rect x="6.4" y="14.299999999999999" width="8.4" height="0.9" fill="#8c8c8c"/><rect x="4.2" y="16.2" width="1.1" height="1.1" fill="#2f8cf0"/><rect x="6.4" y="16.3" width="8.4" height="0.9" fill="#8c8c8c"/><rect x="4.2" y="18.2" width="1.1" height="1.1" fill="#2f8cf0"/><rect x="6.4" y="18.3" width="8.4" height="0.9" fill="#8c8c8c"/><rect x="4.2" y="20.2" width="1.1" height="1.1" fill="#2f8cf0"/><rect x="6.4" y="20.3" width="8.4" height="0.9" fill="#8c8c8c"/><path d="M13.6 16.2 L10.4 20.6" stroke="#8a8a8a" stroke-width="1.3" stroke-linecap="round"/><g transform="translate(17.2,9.6) rotate(35)"><ellipse cx="0" cy="5.2" rx="5.2" ry="2.3" fill="url(#gPin)" stroke="#c88a00" stroke-width=".5"/><path d="M-2.4 -3 L2.4 -3 L3 5 L-3 5 Z" fill="url(#gPin)"/><ellipse cx="0" cy="-3.6" rx="4" ry="2.4" fill="#ffd840" stroke="#d89a00" stroke-width=".5"/></g></svg></div>
<div class="abs" style="left:25px;top:52px;width:15px;height:13px"><svg width="15" height="13" viewBox="0 0 15 13"><path d="M1.2 0 H13.8 L15 1.4 V13 H0 V1.4 Z" fill="#7ea6e2"/><rect x="1.2" y=".5" width="12.6" height="1.6" fill="#8db2ea"/><rect x=".8" y="2.6" width="4.2" height="9.4" fill="#9bbbec"/><path d="M0 12.5 H14.5 V1.6" fill="none" stroke="#5c84c6" stroke-width="1"/><rect x="5" y="3" width="9" height="9" fill="#fff"/><rect x="6" y="4.0" width="1.3" height="1" fill="#2f8cf0"/><rect x="7.4" y="4.0" width="5.6" height=".95" fill="#7a7a7a"/><rect x="6" y="6.05" width="1.3" height="1" fill="#2f8cf0"/><rect x="7.4" y="6.05" width="5.6" height=".95" fill="#7a7a7a"/><rect x="6" y="8.1" width="1.3" height="1" fill="#2f8cf0"/><rect x="7.4" y="8.1" width="5.6" height=".95" fill="#7a7a7a"/><rect x="6" y="10.149999999999999" width="1.3" height="1" fill="#2f8cf0"/><rect x="7.4" y="10.149999999999999" width="5.6" height=".95" fill="#7a7a7a"/></svg></div>
<div class="abs" style="left:950px;top:50px;width:17px;height:17px"><svg width="17" height="17" viewBox="0 0 17 17"><path d="M1.8 3 L14.4 1.8 L15 11 L3.6 12.8 Z" fill="#d4d4d4"/><path d="M2.6 3.6 L13.8 2.6 L14.3 10.4 L4.2 11.9 Z" fill="url(#gMo)"/><path d="M7.6 12.4 L11 11.9 L11.4 14 L7.4 14.4 Z" fill="#b4b4b4"/><ellipse cx="9.4" cy="14.8" rx="3.6" ry="1" fill="#c8c8c8"/></svg></div>
<div class="abs" style="left:1017px;top:51px;width:16px;height:16px"><svg width="16" height="16" viewBox="0 0 16 16"><circle cx="8" cy="8.1" r="7.2" fill="#e6eefa" stroke="#a4c0e8" stroke-width="1"/><circle cx="8" cy="8.1" r="5.6" fill="url(#gHp)"/><text x="8" y="11.4" text-anchor="middle" font-family="Liberation Sans,Arial,sans-serif" font-weight="bold" font-size="9.5" fill="#fff">?</text></svg></div>
<div class="abs" style="left:1056px;top:115px;width:14px;height:14px"><svg width="14" height="14" viewBox="0 0 14 14"><rect x=".5" y=".5" width="13" height="13" fill="#c6c054" stroke="#505050"/><rect x="2.8" y=".8" width="8.4" height="6.2" fill="#e9e9e9" stroke="#606060" stroke-width=".8"/><rect x="3" y="9" width="8.6" height="4.2" fill="#646464"/><rect x="8.8" y="9.8" width="1.9" height="3.2" fill="#fafafa"/><rect x="12" y="1" width="1" height="1" fill="#fff"/></svg></div>

<div class="abs" id="dlg"></div>
<div class="abs" style="left:574px;top:291px;width:243px;height:280px;background:#dedede"></div>
<div class="abs" style="left:581px;top:299px;width:202px;height:202px;background:#fff"></div>
<div class="abs" style="left:785px;top:299px;width:25px;height:25px;border:1px solid #b6b6b6;background:#e1e1e1"></div>
<div class="abs btn3" style="left:623px;top:541px;width:60px;height:23px"></div>
<div class="abs btn3" style="left:683px;top:541px;width:60px;height:23px"></div>
<div class="abs" style="left:743px;top:541px;width:25px;height:25px;border:1px solid #bdbdbd;background:#e1e1e1"></div>
<div class="abs t" style="left:582px;top:269px;font-family:'Liberation Sans',Arial,sans-serif;font-size:13px;line-height:16px;color:#f4f5f9;transform:scaleX(1.0064)">Upload to Multiple Students</div>
<div class="abs t" style="left:645px;top:546px;font-family:'Liberation Sans',Arial,sans-serif;font-size:13px;line-height:16px;transform:scaleX(0.8512)">OK</div>
<div class="abs t" style="left:694px;top:546px;font-family:'Liberation Sans',Arial,sans-serif;font-size:13px;line-height:16px;transform:scaleX(0.9390)">Cancel</div>
<div class="abs" style="left:785px;top:299px;width:25px;height:25px"><svg width="25" height="25" viewBox="0 0 25 25"><rect x="5.6" y="5.6" width="13" height="13" rx="1.6" fill="#fff" stroke="#9cb8ea" stroke-width="1.1"/><rect x="7.4" y="7.4" width="9.6" height="6.8" fill="#7ca2e2"/><rect x="7.4" y="14.2" width="9.6" height="1" fill="#62b83a"/><rect x="7.4" y="15.2" width="9.6" height="1.8" fill="#cdeac0"/><path d="M11 13.4 H13.2 L12.1 15.2 Z" fill="#e09030"/><circle cx="12.1" cy="10.3" r="3.3" fill="#7ccc54"/><circle cx="17.5" cy="17.4" r="3.7" fill="#2c8c1e"/><path d="M17.5 15.2 V19.6 M15.3 17.4 H19.7" stroke="#fff" stroke-width="1.5"/></svg></div>
<div class="abs" style="left:743px;top:541px;width:25px;height:25px"><svg width="25" height="25" viewBox="0 0 25 25"><text x="6" y="11.6" font-family="Liberation Sans,Arial,sans-serif" font-weight="bold" font-size="7.2" fill="#4c8c3c" textLength="13.5" lengthAdjust="spacingAndGlyphs">ABC</text><path d="M7.8 13.2 L10.6 13.2 L13 16.4 L21.8 10 L13.2 19.8 L12 19.8 Z" fill="#2f86e2"/></svg></div>
</body></html>
